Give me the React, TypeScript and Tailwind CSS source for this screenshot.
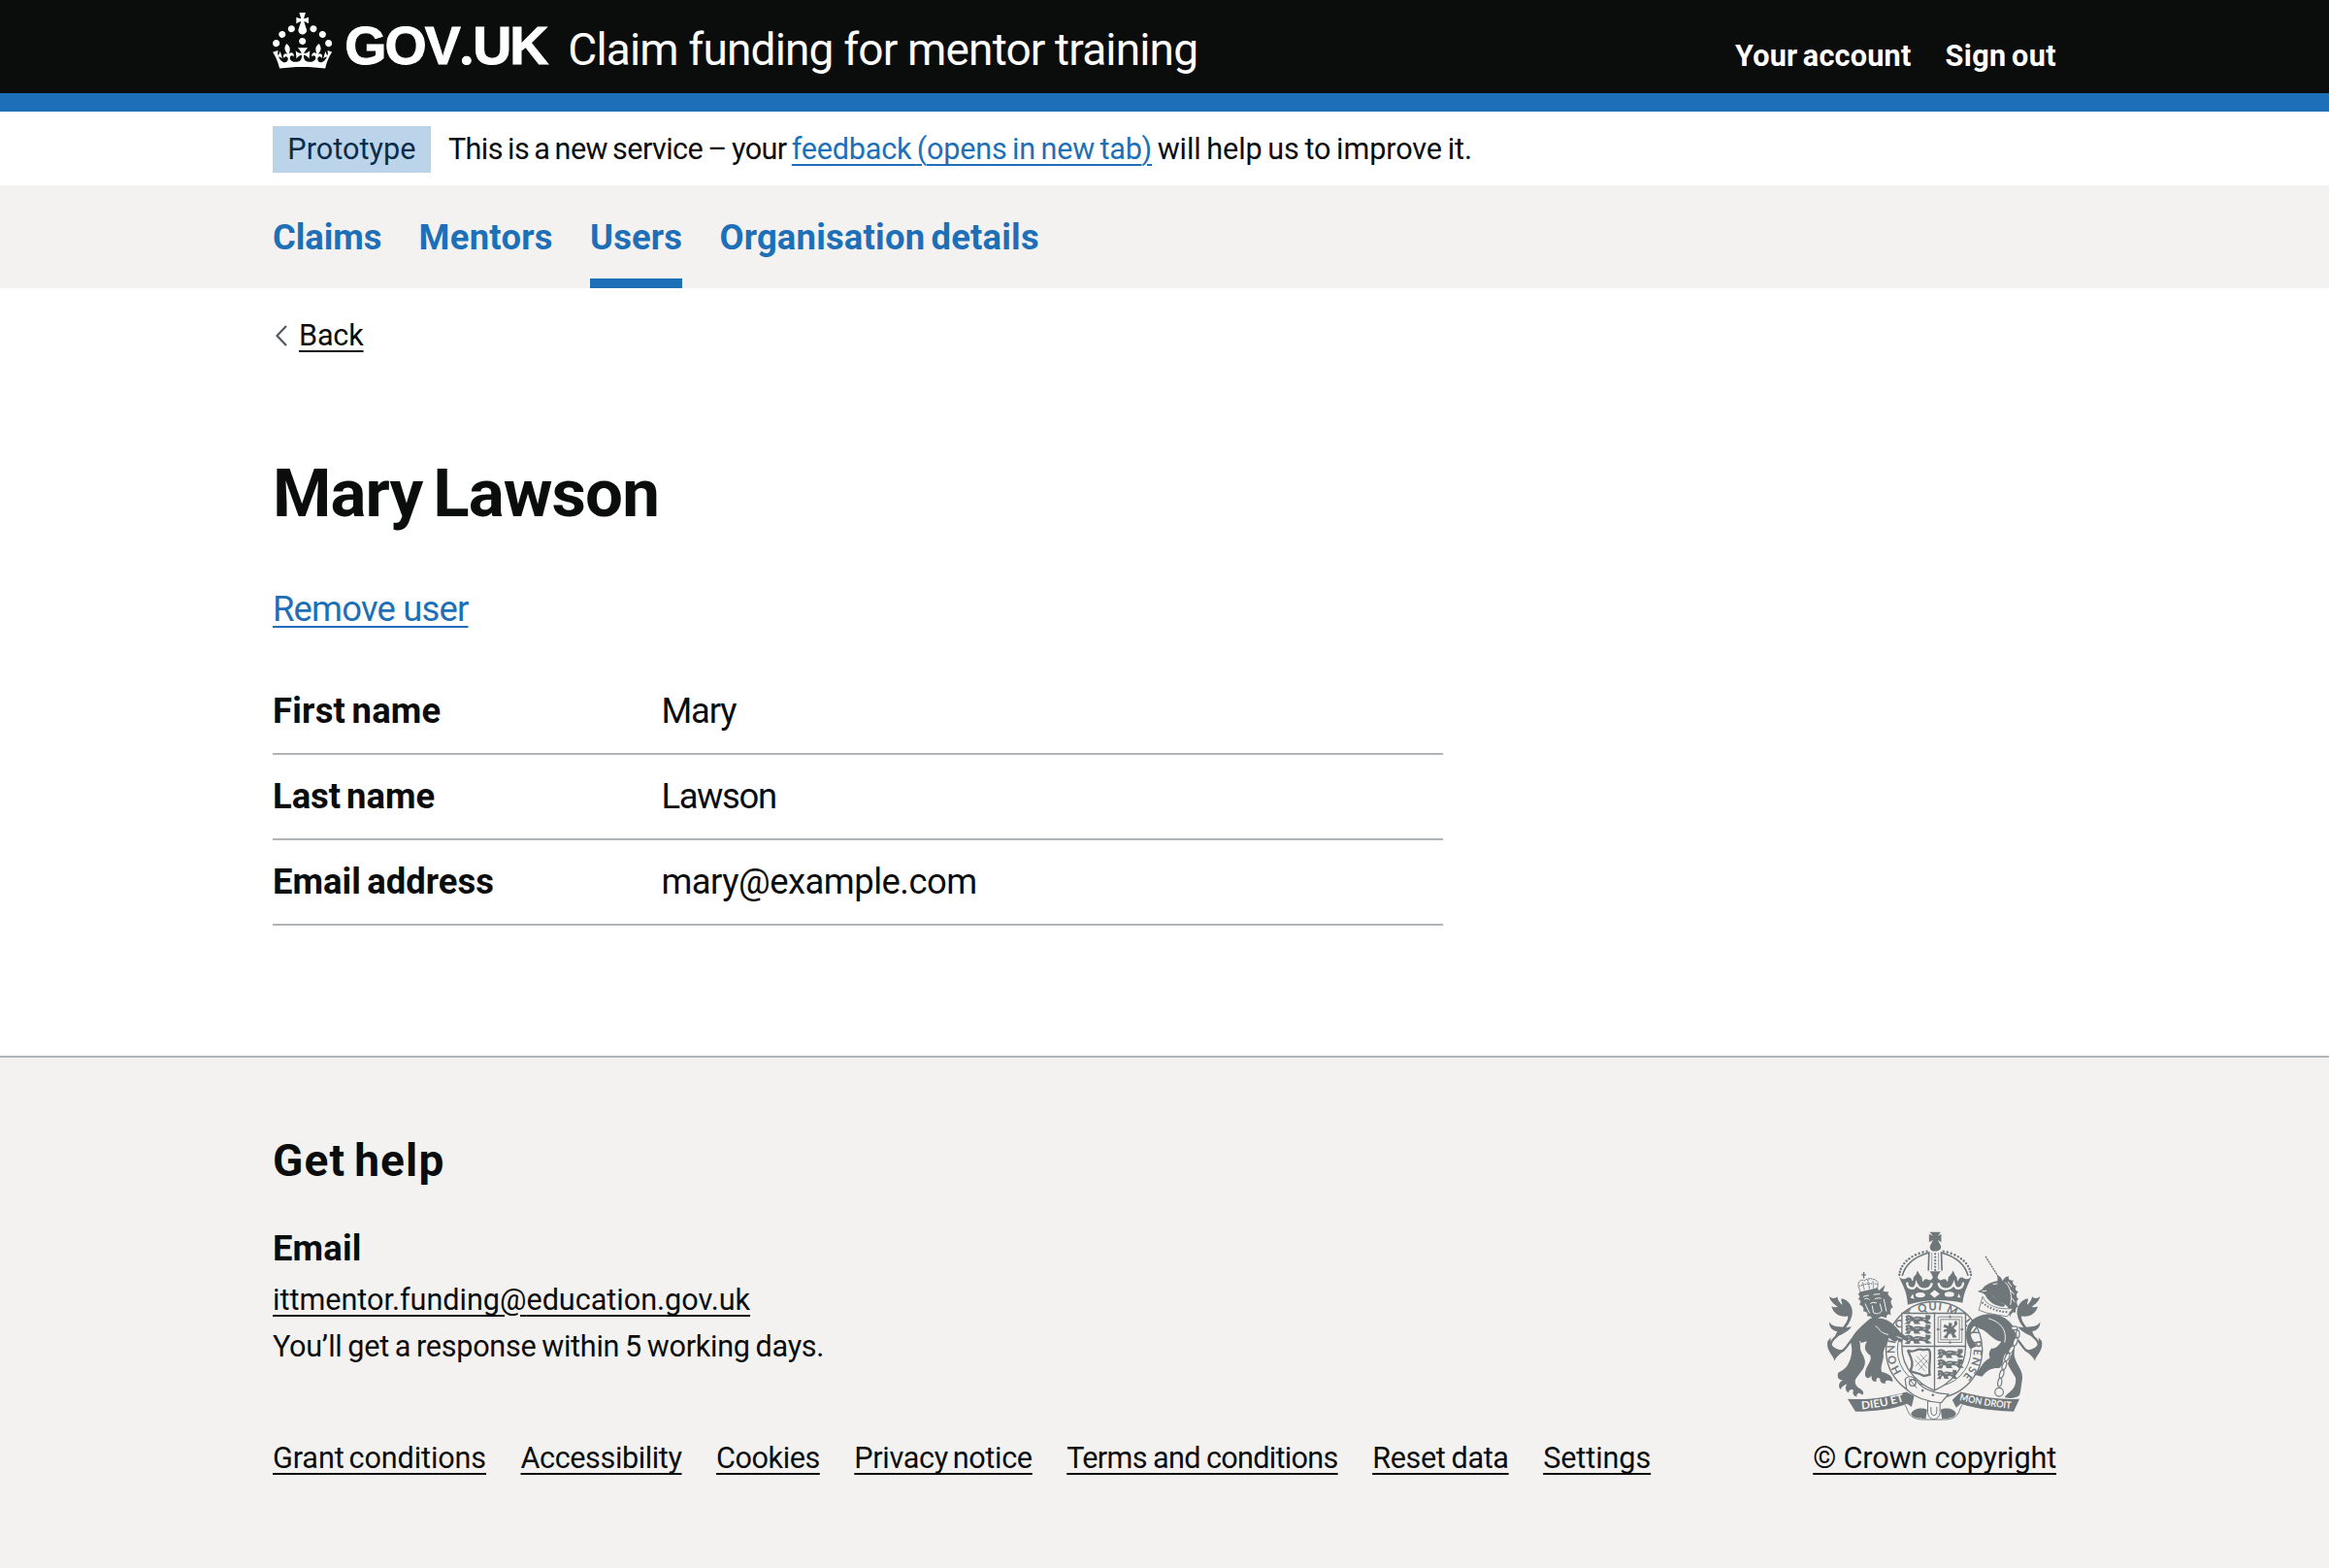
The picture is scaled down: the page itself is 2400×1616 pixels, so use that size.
import React from "react";

const GREY = "#6f777b";
const PAPER = "#f3f2f1";

function CrownIcon() {
  return (
    <svg viewBox="0 0 32 30" className="h-[57.5px] w-[61.3px] shrink-0 fill-white" aria-hidden="true">
      <path d="M22.6 10.4c-1 .4-2-.1-2.4-1-.4-.9.1-2 1-2.4.9-.4 2 .1 2.4 1s-.1 2-1 2.4m-5.9 6.7c-.9.4-2-.1-2.4-1-.4-.9.1-2 1-2.4.9-.4 2 .1 2.4 1s-.1 2-1 2.4m10.8-3.7c-1 .4-2-.1-2.4-1-.4-.9.1-2 1-2.4.9-.4 2 .1 2.4 1s0 2-1 2.4m3.3 4.8c-1 .4-2-.1-2.4-1-.4-.9.1-2 1-2.4.9-.4 2 .1 2.4 1s-.1 2-1 2.4M17 4.7l2.3 1.2V2.5l-2.3.7-.2-.2.9-3h-3.4l.9 3-.2.2c-.1.1-2.3-.7-2.3-.7v3.4L15 4.7c.1.1.1.2.2.2l-1.3 4c-.1.2-.1.4-.1.6 0 1.1.8 2 1.9 2.2h.7c1-.2 1.9-1.1 1.9-2.1 0-.2 0-.4-.1-.6l-1.3-4c-.1-.2 0-.2.1-.3m-7.6 5.7c.9.4 2-.1 2.4-1 .4-.9-.1-2-1-2.4-.9-.4-2 .1-2.4 1s0 2 1 2.4m-5 3c.9.4 2-.1 2.4-1 .4-.9-.1-2-1-2.4-.9-.4-2 .1-2.4 1s.1 2 1 2.4m-3.2 4.8c.9.4 2-.1 2.4-1 .4-.9-.1-2-1-2.4-.9-.4-2 .1-2.4 1s0 2 1 2.4m14.8 11c4.4 0 8.6.3 12.3.8 1.1-4.5 2.4-7 3.7-8.8l-2.5-.9c.2 1.3.3 1.9 0 2.7-.4-.4-.8-1.1-1.1-2.3l-1.2 4c.7-.5 1.3-.8 2-.9-1.1 2.5-2.6 3.1-3.5 3-1.1-.2-1.7-1.2-1.5-2.1.3-1.2 1.5-1.5 2.1-.1 1.1-2.3-.8-3-2-2.3 1.9-1.9 2.1-3.5.6-5.6-2.1 1.6-2.1 3.2-1.2 5.5-1.2-1.4-3.2-.6-2.5 1.6.9-1.4 2.1-.5 1.9.8-.2 1.1-1.7 2.1-3.5 1.9-2.7-.2-2.9-2.1-2.9-3.6.7-.1 1.9.5 2.9 1.9l.4-4.3c-1.1 1.1-2.1 1.4-3.2 1.4.4-1.2 2.1-3 2.1-3h-5.4s1.7 1.9 2.1 3c-1.1 0-2.1-.2-3.2-1.4l.4 4.3c1-1.4 2.2-2 2.9-1.9-.1 1.5-.2 3.4-2.9 3.6-1.9.2-3.4-.8-3.5-1.9-.2-1.3 1-2.2 1.9-.8.7-2.3-1.2-3-2.5-1.6.9-2.2.9-3.9-1.2-5.5-1.5 2-1.3 3.7.6 5.6-1.2-.7-3.1 0-2 2.3.6-1.4 1.8-1.1 2.1.1.2.9-.3 1.9-1.5 2.1-.9.2-2.4-.5-3.5-3 .6 0 1.2.3 2 .9l-1.2-4c-.3 1.1-.7 1.9-1.1 2.3-.3-.8-.2-1.4 0-2.7l-2.9.9C1.3 23 2.6 25.5 3.7 30c3.7-.5 7.9-.8 12.3-.8" />
    </svg>
  );
}

/* One walking lion of the English quarters. */
function SmallLion({ x, y }: { x: number; y: number }) {
  return (
    <g transform={`translate(${x} ${y})`}>
      <path d="M0 3 L10 -1 L20 2 L26 7 C34 2 44 4 54 6 C62 8 66 6 62 -1 L78 0 C81 8 76 15 70 16 L76 20 L82 26 L66 27 L58 19 L46 18 L42 21 L48 27 L28 27 L26 19 L18 18 L14 28 L-2 27 L6 20 L0 14 L4 9 Z" fill={GREY} />
      <path d="M8 6 L14 8 M30 11 L44 10 M56 13 L64 12 M8 18 L16 14" stroke={PAPER} strokeWidth="2" fill="none" />
    </g>
  );
}

function Tail() {
  return (
    <g fill={GREY}>
      <path d="M152 384 C134 404 128 427 104 425 C80 422 78 402 92 386 C110 368 132 352 142 322" fill="none" stroke={GREY} strokeWidth="7" />
      <path d="M79 253 C90 262 98 260 104 254 C106 268 112 270 118 280 C122 272 112 266 118 260 C138 264 154 286 150 310 C146 330 134 346 124 356 L116 356 C128 340 140 326 136 314 C116 320 92 308 86 284 C94 288 100 288 106 286 C94 278 82 268 79 253 Z" />
      <path d="M79 332 C88 350 112 346 130 350 L148 347 C136 366 112 372 96 382 C98 374 100 368 104 362 C90 360 78 350 79 332 Z" />
      <path d="M74 392 L84 380 C80 404 92 418 128 421 C112 432 100 440 95 455 C94 436 68 424 74 392 Z" />
    </g>
  );
}

function CoatOfArms() {
  const dots = Array.from({ length: 12 }, (_, i) => {
    const a = (Math.PI / 180) * (184 + i * 6.6);
    return [407 + 111 * Math.cos(a), 192 + 80 * Math.sin(a)];
  });
  return (
    <svg viewBox="70 50 670 590" className="h-[197px] w-[223px]" role="img" aria-label="Royal coat of arms">
      <defs>
        <path id="garter" d="M303 487 A122 122 0 1 1 470 521" />
        <path id="mottoLeft" d="M180 603 Q250 597 318 576" />
        <path id="mottoRight" d="M482 575 Q560 594 646 602" />
      </defs>

      <Tail />
      <g transform="translate(811 0) scale(-1 1)"><Tail /></g>

      {/* Garter ring */}
      <circle cx="404" cy="419" r="149" fill={PAPER} stroke={GREY} strokeWidth="4" />
      <circle cx="404" cy="419" r="114" fill="none" stroke={GREY} strokeWidth="3" />
      <text fill={GREY} fontSize="34" className="font-['Lato',sans-serif] font-bold">
        <textPath href="#garter" textLength="548">HONI SOIT QUI MAL Y PENSE</textPath>
      </text>

      {/* Shield */}
      <path d="M304 306 H501 V410 C501 480 450 525 404 545 C358 525 304 480 304 410 Z" fill={PAPER} stroke={GREY} strokeWidth="4" />
      <path d="M405 306 V543 M304 408 H501" stroke={GREY} strokeWidth="4" />
      <SmallLion x={314} y={312} />
      <SmallLion x={314} y={342} />
      <SmallLion x={314} y={373} />
      <SmallLion x={414} y={417} />
      <SmallLion x={414} y={449} />
      <g transform="translate(414 482) scale(.75 1)"><SmallLion x={0} y={0} /></g>
      <path d="M416 317 H490 V396 H416 Z M424 325 V388 H482 V325 Z" fill="none" stroke={GREY} strokeWidth="2.5" />
      <path d="M453 313 V321 M453 392 V400 M412 356 H420 M486 356 H494" stroke={GREY} strokeWidth="5" />
      <path d="M450 334 L460 338 L457 348 L466 342 L466 332 L473 328 L476 340 L464 352 L474 360 L466 368 L474 380 L462 382 L456 368 L448 372 L444 384 L432 380 L442 370 L444 362 L432 364 L434 356 L446 354 L432 348 L436 340 L448 346 Z" fill={GREY} />
      <path d="M322 420 C336 432 350 414 364 418 C376 422 382 414 389 420 C396 434 386 460 390 496 L372 500 C350 486 340 492 330 484 C344 460 330 440 322 420 Z" fill="none" stroke={GREY} strokeWidth="7" />
      <path d="M350 438 L382 476 M344 450 L376 486 M360 432 L386 462 M382 434 L346 470 M384 450 L356 482" stroke={GREY} strokeWidth="2" />

      {/* Crown */}
      <path d="M390 54 H424 L416 66 L426 60 V86 L415 79 L422 92 C430 104 422 114 407 114 C392 114 386 104 394 92 L400 79 L388 86 V60 L400 66 Z" fill={GREY} />
      <path d="M305 190 C316 148 352 128 388 118 L386 174 M509 190 C498 148 462 128 426 118 L428 174" fill="none" stroke={GREY} strokeWidth="5" />
      <path d="M397 118 L396 172 M417 118 L418 172" stroke={GREY} strokeWidth="2" />
      {[122, 132, 142, 152, 162, 172].map((y) => <circle key={y} cx="407" cy={y} r="3.4" fill={GREY} />)}
      {dots.map(([x, y], i) => (
        <g key={i} fill={GREY}>
          <circle cx={x} cy={y} r="3.6" />
          <circle cx={814 - x} cy={y} r="3.6" />
        </g>
      ))}
      <path d="M295 192 C302 202 312 202 320 196 C328 192 334 198 336 206 C342 204 336 194 344 190 C348 186 350 180 352 174 C356 180 358 186 362 190 C370 194 364 204 370 208 C374 196 380 200 392 204 L400 196 C398 186 394 182 390 176 H424 C420 182 416 186 414 196 L422 204 C434 200 440 196 444 208 C450 204 444 194 452 190 C456 186 460 180 462 174 C466 180 468 186 470 190 C478 194 472 204 478 206 C480 198 486 192 494 196 C502 202 512 202 519 192 C512 214 496 236 492 274 C440 262 374 262 322 280 C320 236 304 216 295 192 Z" fill={GREY} />
      <path d="M320 210 C320 232 344 236 349 214 C358 236 392 238 397 212 M417 212 C422 238 456 236 465 214 C470 236 492 232 494 210" fill="none" stroke={PAPER} strokeWidth="7" />
      <path d="M391 246 L405 234 L421 246 L405 258 Z" fill={PAPER} />
      <ellipse cx="361" cy="249" rx="15" ry="8" fill={PAPER} />
      <ellipse cx="451" cy="247" rx="15" ry="8" fill={PAPER} />
      <path d="M330 258 L338 246 L342 262 Z M476 256 L480 244 L486 258 Z" fill={PAPER} />

      {/* Lion */}
      <path d="M186 178 V198 M179 187 H193" stroke={GREY} strokeWidth="4" />
      <path d="M174 236 C160 206 180 198 187 206 C200 192 232 200 230 216 L228 228 L176 242 Z" fill={PAPER} stroke={GREY} strokeWidth="3" strokeDasharray="6 1.5" />
      <path d="M182 210 L188 234 M198 202 L204 230 M214 206 L216 228 M172 222 C190 214 210 212 230 216" fill="none" stroke={GREY} strokeWidth="3.5" strokeDasharray="4 2" />
      <path d="M174 240 L230 228 L232 236 L252 218 L246 238 L264 240 C256 246 264 252 275 262 C268 266 268 274 277 288 C270 288 266 296 270 312 C262 306 256 310 256 320 L240 316 L216 330 L208 316 L196 314 C200 306 194 300 184 300 C188 290 184 284 172 278 C180 272 176 266 168 262 C176 258 174 250 168 248 Z" fill={GREY} />
      <path d="M184 254 L202 250 M216 248 L236 246 M188 262 C194 258 200 260 204 264 M220 262 C226 258 234 258 240 260 M206 276 L214 272 L226 274 M212 282 L216 304 C226 310 238 306 242 298 L236 276 M190 276 L204 306 M248 262 L256 300" fill="none" stroke={PAPER} strokeWidth="3" />
      <path d="M206 322 C180 344 156 364 144 392 C152 412 150 436 140 458 C132 478 118 484 107 490 C102 504 108 514 122 512 C108 520 106 532 114 542 C120 530 128 526 134 526 C126 536 130 546 138 552 C142 542 148 540 154 544 C150 554 154 562 164 564 C164 554 170 548 180 558 C190 556 184 544 172 538 C160 530 158 522 160 512 C170 492 190 480 190 456 C188 436 172 420 176 398 L196 392 C184 412 190 424 206 436 C214 456 188 470 190 498 C194 508 202 510 210 498 C208 512 216 520 226 516 C222 508 228 502 236 508 C236 520 244 526 254 522 C250 514 256 510 276 518 C276 500 260 492 242 488 C234 470 252 446 246 430 C250 410 262 394 264 382 C280 396 286 396 292 388 C296 400 308 398 306 386 L320 392 C322 380 314 374 300 366 C284 344 264 326 240 322 Z" fill={GREY} />
      <path d="M222 346 C240 352 224 362 262 372 M174 392 C180 408 170 420 190 440 M288 378 L304 384" fill="none" stroke={PAPER} strokeWidth="3" />

      {/* Unicorn */}
      <path d="M563 130 L602 192" stroke={GREY} strokeWidth="4.5" strokeDasharray="6 2.5" />
      <path d="M538 238 L552 232 C564 214 586 208 600 206 L600 188 C610 192 614 200 616 206 C620 196 628 190 636 192 C630 200 640 206 650 204 C642 212 652 222 660 222 C650 228 658 238 665 240 C654 246 660 260 666 262 C656 266 660 280 665 286 C656 286 656 296 656 304 C648 300 642 306 638 318 C634 300 640 288 622 278 C600 270 596 262 584 250 C570 254 560 250 556 244 Z" fill={GREY} />
      <path d="M562 250 L584 250 C596 262 604 270 624 280 L620 286 C594 284 574 272 562 250 Z" fill={GREY} />
      <path d="M586 216 L600 214 M624 210 C640 224 646 250 640 280 M552 238 L566 236 M632 208 L644 224 M640 234 L652 248 M644 258 L654 272" fill="none" stroke={PAPER} strokeWidth="3" />
      <path d="M554 254 C562 280 604 298 648 290 L630 316 C600 310 568 308 542 296 Z" fill={PAPER} stroke={GREY} strokeWidth="2.5" />
      <path d="M552 272 C576 292 604 302 636 302" fill="none" stroke={GREY} strokeWidth="6" strokeDasharray="5 5" />
      <path d="M506 350 C516 322 548 306 582 308 C622 310 652 340 656 366 C662 388 650 414 652 438 C660 470 682 484 676 514 C672 540 672 550 668 560 C650 572 636 570 622 566 C634 548 660 544 656 506 C644 482 624 462 626 430 C612 444 624 460 606 476 C588 474 570 478 552 502 L528 496 C548 480 552 456 576 444 C572 430 574 424 582 414 C590 418 600 410 612 394 C584 390 570 360 546 354 L528 346 C512 356 516 384 528 394 L536 408 L516 416 C502 398 500 372 506 350 Z" fill={GREY} />
      <path d="M572 322 C600 330 632 350 622 396" fill="none" stroke={PAPER} strokeWidth="3" />
      <path d="M652 350 L664 372 L656 400 L642 424 L628 458 L616 490 L606 530" fill="none" stroke={PAPER} strokeWidth="9" />
      <g fill={PAPER} stroke={GREY} strokeWidth="3.5">
        <ellipse cx="652" cy="352" rx="10" ry="6" />
        <ellipse cx="663" cy="370" rx="5" ry="12" />
        <ellipse cx="655" cy="394" rx="6" ry="13" transform="rotate(20 655 394)" />
        <ellipse cx="643" cy="418" rx="6" ry="13" transform="rotate(30 643 418)" />
        <ellipse cx="630" cy="442" rx="6" ry="13" transform="rotate(24 630 442)" />
        <ellipse cx="621" cy="468" rx="6" ry="13" transform="rotate(20 621 468)" />
        <ellipse cx="613" cy="494" rx="6" ry="13" transform="rotate(16 613 494)" />
        <ellipse cx="607" cy="520" rx="6" ry="13" transform="rotate(8 607 520)" />
        <circle cx="605" cy="550" r="13" />
      </g>

      {/* Motto ribbon */}
      <path d="M312 588 C326 604 318 634 372 635 H436 C486 634 478 604 492 588" fill={PAPER} stroke={GREY} strokeWidth="3" />
      <path d="M332 618 C338 600 366 596 382 604 L378 633 C354 632 338 630 332 618 Z M472 618 C468 600 440 596 424 604 L428 633 C452 632 466 630 472 618 Z" fill={GREY} />
      <path d="M136 571 C210 576 270 562 318 549 L342 562 L334 596 L320 586 C276 604 214 610 160 610 Z" fill={GREY} />
      <path d="M668 571 C600 576 540 562 486 549 L460 574 L472 598 L486 586 C532 602 596 608 650 610 Z" fill={GREY} />
      <g fill={PAPER} className="font-['Lato',sans-serif] font-bold">
        <text fontSize="34"><textPath href="#mottoLeft" textLength="134" lengthAdjust="spacingAndGlyphs">DIEU ET</textPath></text>
        <text fontSize="30"><textPath href="#mottoRight" textLength="162" lengthAdjust="spacingAndGlyphs">MON DROIT</textPath></text>
      </g>

      {/* Buckle and strap */}
      <path d="M384 578 V612 A19 22 0 0 0 422 612 V578 Z" fill={PAPER} stroke={GREY} strokeWidth="3" />
      <path d="M394 596 V610 A9 12 0 0 0 412 610 V596" fill="none" stroke={GREY} strokeWidth="3" />
      <path d="M314 510 C324 496 344 502 352 518 C372 544 408 554 448 556 L426 583 C384 580 340 566 318 540 Z" fill={PAPER} stroke={GREY} strokeWidth="3.5" />
      <circle cx="337" cy="521" r="10" fill="none" stroke={GREY} strokeWidth="4" />
      <path d="M326 508 L350 538" stroke={GREY} strokeWidth="3" />
      <circle cx="368" cy="545" r="4" fill={GREY} />
      <circle cx="400" cy="559" r="4" fill={GREY} />
    </svg>
  );
}

const linkBase = "underline decoration-2 underline-offset-[5px] [text-decoration-skip-ink:none] whitespace-nowrap";

const navItems = [
  { label: "Claims", className: "tracking-[-0.08px]" },
  { label: "Mentors", className: "tracking-[0.27px]" },
  { label: "Users", className: "tracking-[0.13px] shadow-[inset_0_-10px_0_#1d70b8]" },
  { label: "Organisation details", className: "tracking-[0.2px]" },
];

const rows = [
  { key: "First name", keyClass: "tracking-[0.24px]", value: "Mary", valueClass: "tracking-[-1.1px]" },
  { key: "Last name", keyClass: "tracking-[-0.04px]", value: "Lawson", valueClass: "tracking-[-1.35px]" },
  { key: "Email address", keyClass: "tracking-[0.05px]", value: "mary@example.com", valueClass: "tracking-[-0.5px]" },
];

const footerLinks = [
  { label: "Grant conditions", className: "tracking-[-0.12px] [word-spacing:-0.08em]" },
  { label: "Accessibility", className: "tracking-[-0.4px]" },
  { label: "Cookies", className: "tracking-[-0.43px]" },
  { label: "Privacy notice", className: "tracking-[-0.325px] [word-spacing:-0.08em]" },
  { label: "Terms and conditions", className: "tracking-[-0.7px] [word-spacing:-0.02em]" },
  { label: "Reset data", className: "tracking-[-0.35px] [word-spacing:-0.04em]" },
  { label: "Settings", className: "tracking-[-0.09px]" },
];

function Container({ className = "", children }: { className?: string; children: React.ReactNode }) {
  return <div className={"mx-auto w-[1838px] " + className}>{children}</div>;
}

export default function App() {
  return (
    <div className="flex min-h-[1616px] flex-col bg-white font-['Roboto',sans-serif] text-[30.6px] text-[#0b0c0c]">
      <header className="h-[115px] border-b-[19px] border-[#1d70b8] bg-[#0b0c0c] text-white">
        <Container className="flex items-start">
          <a className="flex items-start pt-[13px]">
            <CrownIcon />
            <span className="ml-[13px] mt-[6px] w-[212px] whitespace-nowrap font-['Liberation_Sans',sans-serif] text-[55.5px] font-bold leading-[56px] tracking-[-1.9px] [-webkit-text-stroke:1px_white]">
              GOV<span className="font-['Roboto',sans-serif]">.</span>UK
            </span>
          </a>
          <a className="ml-[18px] mt-[23px] whitespace-nowrap text-[46px] leading-[56px] tracking-[-0.84px]">Claim funding for mentor training</a>
          <nav className="ml-auto mt-[34px] flex gap-[35px] whitespace-nowrap font-bold leading-[48px]">
            <a className="tracking-[0.22px] [word-spacing:-0.08em]">Your account</a>
            <a className="tracking-[0.38px] [word-spacing:-0.08em]">Sign out</a>
          </nav>
        </Container>
      </header>

      <Container className="flex h-[76px] items-start pt-[15px] leading-[48px]">
        <strong className="h-[48px] bg-[#bbd4ea] px-[15.3px] font-normal tracking-[0.05px] text-[#0c2d4a]">Prototype</strong>
        <p className="ml-[18px] whitespace-pre tracking-[-0.59px] [word-spacing:-1.8px]">
          {"This is a new service – your "}
          <a className={linkBase + " tracking-[-0.23px] text-[#1d70b8]"}>
            feedback <span className="[text-decoration-skip-ink:auto]">(</span>opens in new tab<span className="[text-decoration-skip-ink:auto]">)</span>
          </a>
          <span className="tracking-[-0.1px]">{" will help us to improve it."}</span>
        </p>
      </Container>

      <nav className="h-[106px] bg-[#f3f2f1]">
        <Container className="flex gap-[38.3px] whitespace-nowrap text-[36.4px] font-bold leading-[108px] text-[#1d70b8]">
          {navItems.map((n) => (
            <a key={n.label} className={"h-[106px] [word-spacing:-0.08em] " + n.className}>{n.label}</a>
          ))}
        </Container>
      </nav>

      <Container>
        <a className="mt-[31px] flex h-[35px] items-center leading-[35px]">
          <svg viewBox="0 0 12 22" className="ml-[3px] h-[22px] w-[12px]" aria-hidden="true">
            <path d="M11 1 L1.5 11 L11 21" fill="none" stroke="#505a5f" strokeWidth="2.2" />
          </svg>
          <span className={linkBase + " ml-[12px] tracking-[-0.18px]"}>Back</span>
        </a>
        <h1 className="mt-[110px] text-[69px] font-bold leading-[71px] tracking-[-0.87px] [word-spacing:-0.08em]">Mary Lawson</h1>
        <p className="mt-[60px] text-[36.4px] leading-[48px]">
          <a className={linkBase + " tracking-[-0.8px] text-[#1d70b8]"}>Remove user</a>
        </p>
        <dl className="mt-[37.5px] w-[1206px] text-[36.4px] leading-[48px]">
          {rows.map((r) => (
            <div key={r.key} className="flex h-[88.2px] border-b-2 border-[#b1b4b6] pt-[19.5px]">
              <dt className={"w-[400.4px] font-bold [word-spacing:-0.08em] " + r.keyClass}>{r.key}</dt>
              <dd className={r.valueClass}>{r.value}</dd>
            </div>
          ))}
        </dl>
      </Container>

      <footer className="mt-[133.9px] grow border-t-2 border-[#b1b4b6] bg-[#f3f2f1]">
        <Container className="flex items-end justify-between pt-[77.6px]">
          <div>
            <h2 className="text-[46px] font-bold leading-[56px] tracking-[1.16px] [word-spacing:-0.08em]">Get help</h2>
            <h3 className="mt-[41px] text-[36.4px] font-bold leading-[44px] tracking-[0.15px]">Email</h3>
            <p className="mt-[7px] leading-[48px]">
              <a className={linkBase + " tracking-[-0.02px]"}>
                ittmentor.funding<span className="[text-decoration-skip-ink:auto]">@</span>education.gov.uk
              </a>
            </p>
            <p className="leading-[48px] tracking-[-0.29px] [word-spacing:-1.4px]">You’ll get a response within 5 working days.</p>
            <ul className="mt-[73px] flex gap-[35.5px] leading-[36px]">
              {footerLinks.map((l) => (
                <li key={l.label}>
                  <a className={linkBase + " " + l.className}>{l.label}</a>
                </li>
              ))}
            </ul>
          </div>
          <div className="flex flex-col items-center">
            <CoatOfArms />
            <a className={linkBase + " mt-5 leading-[36px] tracking-[-0.15px]"}>© Crown copyright</a>
          </div>
        </Container>
      </footer>
    </div>
  );
}
